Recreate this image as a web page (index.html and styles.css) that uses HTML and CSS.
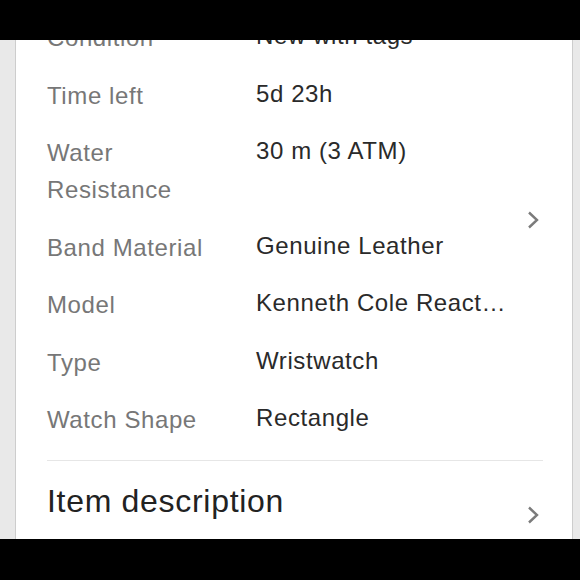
FILE: index.html
```html
<html>
<head>
<meta name="viewport" content="width=device-width, initial-scale=1.0" />
<link rel="stylesheet" href="styles.css">
</head>
<body>
<div class="phone">
  <div class="bar-top"></div>
  <div class="screen">
    <div class="card">
      <!-- item specifics, scrolled so the first row sits under the bar -->
      <div class="specs">
        <div class="spec-list">
          <div class="spec-row"><div class="spec-label">Condition</div><div class="spec-value">New with tags</div></div>
          <div class="spec-row"><div class="spec-label">Time left</div><div class="spec-value">5d 23h</div></div>
          <div class="spec-row"><div class="spec-label">Water Resistance</div><div class="spec-value">30 m (3 ATM)</div></div>
          <div class="spec-row"><div class="spec-label">Band Material</div><div class="spec-value">Genuine Leather</div></div>
          <div class="spec-row"><div class="spec-label">Model</div><div class="spec-value">Kenneth Cole React…</div></div>
          <div class="spec-row"><div class="spec-label">Type</div><div class="spec-value">Wristwatch</div></div>
          <div class="spec-row"><div class="spec-label">Watch Shape</div><div class="spec-value">Rectangle</div></div>
        </div>
        <div class="chevron spec-more">
          <svg width="12" height="18" viewBox="0 0 12 18"><polyline points="2,1.5 10,9 2,16.5" fill="none" stroke="#7b7b7b" stroke-width="2.4"/></svg>
        </div>
      </div>
      <div class="section-row">
        <div class="section-title">Item description</div>
        <div class="chevron">
          <svg width="12" height="18" viewBox="0 0 12 18"><polyline points="2,1.5 10,9 2,16.5" fill="none" stroke="#7b7b7b" stroke-width="2.4"/></svg>
        </div>
      </div>
    </div>
  </div>
  <div class="bar-bottom"></div>
</div>
</body>
</html>
```

FILE: styles.css
```css
body {
  margin: 0;
  background: #000;
  font-family: "Liberation Sans", Arial, sans-serif;
}

.phone {
  height: 580px;
  display: flex;
  flex-direction: column;
}

.bar-top {
  height: 40px;
  background: #000;
}

.bar-bottom {
  flex: 1;
  background: #000;
}

.screen {
  height: 499px;
  overflow: hidden;
  background: #e9e9e9;
  display: flex;
}

.card {
  flex: 1;
  margin: 0 7px 0 15px;
  padding: 0 29px 0 31px;
  background: #fff;
  border-left: 1px solid #cdcdcd;
  border-right: 1px solid #cdcdcd;
}

.specs {
  display: flex;
  margin-top: -31px;
}

.spec-list {
  flex: 1;
}

.spec-row {
  display: grid;
  grid-template-columns: 209px 1fr;
  padding: 10px 0 10.5px;
  font-size: 24px;
  line-height: 37px;
  letter-spacing: 0.6px;
}

.spec-label {
  color: #777;
  padding-right: 20px;
}

.spec-value {
  color: #2a2a2a;
  margin-top: -2px;
  white-space: nowrap;
}

.chevron {
  width: 12px;
  height: 18px;
  margin-right: 4px;
}

.chevron svg {
  display: block;
}

.spec-more {
  align-self: center;
  margin-bottom: 17px;
}

.section-row {
  display: flex;
  justify-content: space-between;
  align-items: center;
  min-height: 108px;
  margin-top: 11px;
  border-top: 1px solid #e6e6e6;
}

.section-title {
  align-self: flex-start;
  padding-top: 20px;
  font-size: 32px;
  line-height: 40px;
  letter-spacing: 0.7px;
  color: #222;
}
```
